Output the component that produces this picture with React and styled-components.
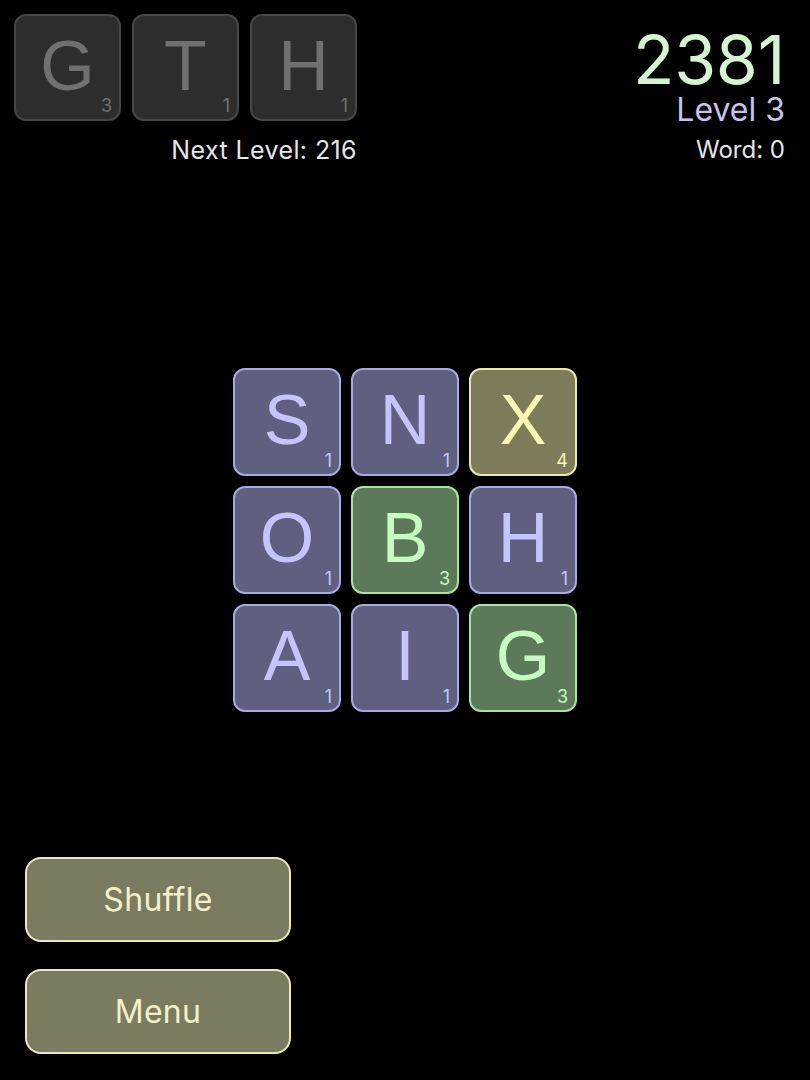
import React from "react";
import styled, { createGlobalStyle } from "styled-components";

const Color = {
  Page: "#000000",
  Score: "#d4f5d0",
  Level: "#c4c4ee",
  Text: "#e6e6e6",
  ButtonBg: "#7b7b62",
  ButtonBorder: "#ece8b8",
  ButtonText: "#f4f0c8",
};

const TILE_THEMES = {
  used: { bg: "#2d2d2d", border: "#474747", text: "#707070" },
  plain: { bg: "#5f5f80", border: "#a9a9e2", text: "#c4c4ff" },
  gold: { bg: "#7d7b5a", border: "#ebe9aa", text: "#fbf8b4" },
  green: { bg: "#5c7a5a", border: "#abe2a3", text: "#c6fcc2" },
};

const GlobalStyle = createGlobalStyle`
  html, body {
    margin: 0;
    padding: 0;
    background: ${Color.Page};
  }
  body {
    font-family: "Inter", "Noto Sans", sans-serif;
  }
`;

const Screen = styled.div`
  width: 810px;
  height: 1080px;
  box-sizing: border-box;
  display: flex;
  flex-direction: column;
  background: ${Color.Page};
  overflow: hidden;
`;

const Header = styled.header`
  display: flex;
  justify-content: space-between;
  align-items: flex-start;
  padding: 14px 25px 0 14px;
`;

const UsedColumn = styled.div`
  display: flex;
  flex-direction: column;
  align-items: flex-end;
`;

const UsedRow = styled.div`
  display: flex;
  gap: 11px;
`;

const NextLevel = styled.div`
  margin-top: 16px;
  font-size: 25px;
  line-height: 1.1;
  color: ${Color.Text};
  letter-spacing: 0.4px;
`;

const ScoreColumn = styled.div`
  display: flex;
  flex-direction: column;
  align-items: flex-end;
  padding-top: 11px;
`;

const Score = styled.div`
  font-size: 68px;
  line-height: 68px;
  color: ${Color.Score};
  letter-spacing: -0.3px;
`;

const LevelLabel = styled.div`
  font-size: 32px;
  line-height: 34px;
  color: ${Color.Level};
`;

const WordLabel = styled.div`
  margin-top: 10px;
  font-size: 24px;
  line-height: 26px;
  color: ${Color.Text};
`;

const Board = styled.div`
  margin: 203px auto 0;
  display: grid;
  grid-template-columns: repeat(3, 108px);
  grid-auto-rows: 108px;
  gap: 10px;
`;

const TileBox = styled.div`
  position: relative;
  width: ${({ $size }) => $size}px;
  height: ${({ $size }) => $size}px;
  box-sizing: border-box;
  border-radius: 12px;
  border: 2px solid ${({ $theme }) => $theme.border};
  background: ${({ $theme }) => $theme.bg};
  color: ${({ $theme }) => $theme.text};
  display: flex;
  align-items: center;
  justify-content: center;
`;

const Letter = styled.span`
  font-family: "Liberation Sans", Arial, sans-serif;
  font-size: 70px;
  line-height: 1;
  margin-top: -4px;
`;

const Points = styled.span`
  position: absolute;
  right: 7px;
  bottom: 4px;
  font-family: "Inter", sans-serif;
  font-size: 18px;
  line-height: 1;
`;

const Footer = styled.div`
  margin-top: auto;
  padding: 0 0 26px 25px;
  display: flex;
  flex-direction: column;
  gap: 27px;
`;

const ActionButton = styled.button`
  width: 266px;
  height: 85px;
  box-sizing: border-box;
  border-radius: 16px;
  border: 2px solid ${Color.ButtonBorder};
  background: ${Color.ButtonBg};
  color: ${Color.ButtonText};
  font-family: "Inter", "Noto Sans", sans-serif;
  font-size: 32px;
  letter-spacing: 0.3px;
  cursor: pointer;
`;

function Tile({ letter, points, kind, size = 108 }) {
  return (
    <TileBox $theme={TILE_THEMES[kind]} $size={size}>
      <Letter>{letter}</Letter>
      <Points>{points}</Points>
    </TileBox>
  );
}

const used = [
  { letter: "G", points: 3 },
  { letter: "T", points: 1 },
  { letter: "H", points: 1 },
];

const board = [
  { letter: "S", points: 1, kind: "plain" },
  { letter: "N", points: 1, kind: "plain" },
  { letter: "X", points: 4, kind: "gold" },
  { letter: "O", points: 1, kind: "plain" },
  { letter: "B", points: 3, kind: "green" },
  { letter: "H", points: 1, kind: "plain" },
  { letter: "A", points: 1, kind: "plain" },
  { letter: "I", points: 1, kind: "plain" },
  { letter: "G", points: 3, kind: "green" },
];

export default function App() {
  return (
    <Screen>
      <GlobalStyle />
      <Header>
        <UsedColumn>
          <UsedRow>
            {used.map((t, i) => (
              <Tile key={i} {...t} kind="used" size={107} />
            ))}
          </UsedRow>
          <NextLevel>Next Level: 216</NextLevel>
        </UsedColumn>
        <ScoreColumn>
          <Score>2381</Score>
          <LevelLabel>Level 3</LevelLabel>
          <WordLabel>Word: 0</WordLabel>
        </ScoreColumn>
      </Header>

      <Board>
        {board.map((t, i) => (
          <Tile key={i} {...t} />
        ))}
      </Board>

      <Footer>
        <ActionButton>Shuffle</ActionButton>
        <ActionButton>Menu</ActionButton>
      </Footer>
    </Screen>
  );
}
